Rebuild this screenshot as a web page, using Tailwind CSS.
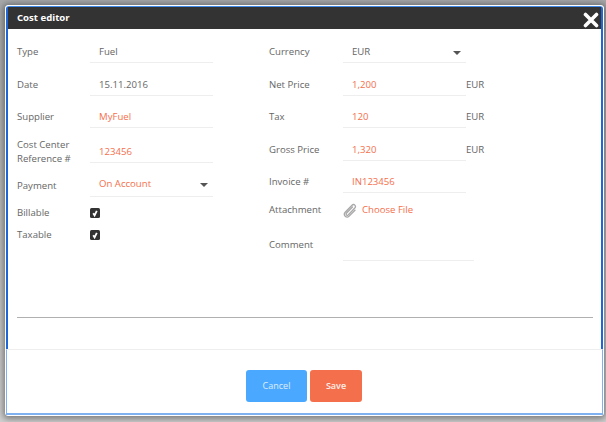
<!DOCTYPE html>
<html lang="en">

<head>
    <meta charset="UTF-8">
    <meta name="viewport" content="width=device-width, initial-scale=1">
    <title>Cost editor</title>
    <script src="https://cdn.jsdelivr.net/npm/@tailwindcss/browser@4"></script>
</head>

<body class="h-[422px] w-[606px] overflow-hidden bg-gradient-to-b from-[#a6a8a9] to-[#cfcfcf] pt-[5px] pl-[5px] font-['Open_Sans',sans-serif] text-[9.6px] text-[#666]">
    <div class="h-[411px] w-[599px] rounded-[3px] border border-white bg-white shadow-[0_1px_6px_2px_rgba(0,0,0,0.4)]">
        <div class="flex h-full flex-col">
            <div class="h-[343px] shrink-0 rounded-t-[3px] border-x-2 border-t border-x-[#1f66d8] border-t-[#3f8ae8]">
                <div class="flex h-[22px] items-center justify-between bg-[#333] pr-[2px] pl-[9px] text-white">
                    <span class="font-bold">Cost editor</span>
                    <svg width="16" height="16" viewBox="0 0 16 16" class="mt-[4px]"><path d="M2.5 2.5 L13.5 13.5 M13.5 2.5 L2.5 13.5" stroke="#fff" stroke-width="3.6" stroke-linecap="round" /></svg>
                </div>

                <div class="pr-[8px] pl-[9px]">
                    <div class="flex h-[288px]">
                        <!-- left column -->
                        <div class="w-[252px] shrink-0 pt-[6px]">
                            <div class="flex h-[28px] items-center"><span class="mt-[6px] w-[73px]">Type</span><div class="flex h-[28px] w-[123px] items-center border-b border-[#eee] pt-[8px] pl-[9px]">Fuel</div></div>
                            <div class="mt-[5px] flex h-[28px] items-center"><span class="mt-[6px] w-[73px]">Date</span><div class="flex h-[28px] w-[123px] items-center border-b border-[#eee] pt-[8px] pl-[9px]">15.11.2016</div></div>
                            <div class="mt-[4px] flex h-[28px] items-center"><span class="mt-[6px] w-[73px]">Supplier</span><div class="flex h-[28px] w-[123px] items-center border-b border-[#eee] pt-[8px] pl-[9px] text-[#f46f4c]">MyFuel</div></div>
                            <div class="mt-[7px] flex h-[28px] items-center"><span class="mt-[6px] w-[73px] leading-[14px]">Cost Center<br>Reference #</span><div class="flex h-[28px] w-[123px] items-center border-b border-[#eee] pt-[8px] pl-[9px] text-[#f46f4c]">123456</div></div>
                            <div class="mt-[6px] flex h-[28px] items-center"><span class="mt-[6px] w-[73px]">Payment</span><div class="flex h-[28px] w-[123px] items-center justify-between border-b border-[#eee] pt-[4px] pr-[5px] pl-[9px] text-[#f46f4c]">On Account<span class="h-0 w-0 border-x-[4px] border-t-[4px] border-x-transparent border-t-[#555]"></span></div></div>
                            <div class="mt-[5px] flex h-[22px] items-center"><span class="w-[73px]">Billable</span><svg width="10" height="10" viewBox="0 0 10 10"><rect width="10" height="10" rx="1.5" fill="#333" /><path d="M3.2 5.2 L4.6 7.4 L6.8 2.8" stroke="#fff" stroke-width="1.8" fill="none" /></svg></div>
                            <div class="flex h-[22px] items-center"><span class="w-[73px]">Taxable</span><svg width="10" height="10" viewBox="0 0 10 10"><rect width="10" height="10" rx="1.5" fill="#333" /><path d="M3.2 5.2 L4.6 7.4 L6.8 2.8" stroke="#fff" stroke-width="1.8" fill="none" /></svg></div>
                        </div>
                        <!-- right column -->
                        <div class="flex-1 pt-[6px]">
                            <div class="flex h-[28px] items-center"><span class="mt-[6px] w-[74px]">Currency</span><div class="flex h-[28px] w-[123px] items-center justify-between border-b border-[#eee] pt-[8px] pr-[5px] pl-[9px]">EUR<span class="h-0 w-0 border-x-[4px] border-t-[4px] border-x-transparent border-t-[#555]"></span></div></div>
                            <div class="mt-[5px] flex h-[28px] items-center"><span class="mt-[6px] w-[74px]">Net Price</span><div class="flex h-[28px] w-[123px] items-center border-b border-[#eee] pt-[8px] pl-[9px] text-[#f46f4c]">1,200</div><span class="mt-[6px]">EUR</span></div>
                            <div class="mt-[4px] flex h-[28px] items-center"><span class="mt-[6px] w-[74px]">Tax</span><div class="flex h-[28px] w-[123px] items-center border-b border-[#eee] pt-[8px] pl-[9px] text-[#f46f4c]">120</div><span class="mt-[6px]">EUR</span></div>
                            <div class="mt-[5px] flex h-[28px] items-center"><span class="mt-[6px] w-[74px]">Gross Price</span><div class="flex h-[28px] w-[123px] items-center border-b border-[#eee] pt-[8px] pl-[9px] text-[#f46f4c]">1,320</div><span class="mt-[6px]">EUR</span></div>
                            <div class="mt-[4px] flex h-[28px] items-center"><span class="mt-[6px] w-[74px]">Invoice #</span><div class="flex h-[28px] w-[123px] items-center border-b border-[#eee] pt-[8px] pl-[9px] text-[#f46f4c]">IN123456</div></div>
                            <div class="mt-[6px] flex h-[22px] items-center">
                                <span class="w-[74px]">Attachment</span>
                                <svg width="14" height="15" viewBox="0 0 14 15" fill="none" stroke="#a8a8a8" stroke-width="1.3" stroke-linecap="round"><path d="M9.5 4 L3.6 10 C2.4 11.3 3.7 13.1 5.2 11.9 L11.8 5 C13.6 3 11 0.2 9 2.2 L2.2 9.2 C-0.3 12 3.4 15.8 6.2 13.1 L12 7.2" /></svg>
                                <span class="ml-[5px] text-[#f46f4c]">Choose File</span>
                            </div>
                            <div class="mt-[10px] flex h-[28px] items-center"><span class="w-[74px]">Comment</span></div>
                            <div class="mt-[1px] ml-[74px] w-[131px] border-b border-[#eee]"></div>
                        </div>
                    </div>
                    <hr class="border-[#b0b0b0]">
                </div>
            </div>

            <div class="flex flex-1 items-start justify-center gap-[3px] border-x border-t border-b-2 border-x-[#7fb0f0] border-t-[#eee] border-b-[#7fb0f0] pt-[20px] pr-[1px] text-[9px]">
                <button type="button" class="h-[32px] w-[61px] rounded-[3px] bg-[#4aa8ff] text-white/80">Cancel</button>
                <button type="button" class="h-[32px] w-[52px] rounded-[3px] bg-[#f46f4c] font-semibold text-white/90">Save</button>
            </div>
        </div>
    </div>
</body>

</html>
